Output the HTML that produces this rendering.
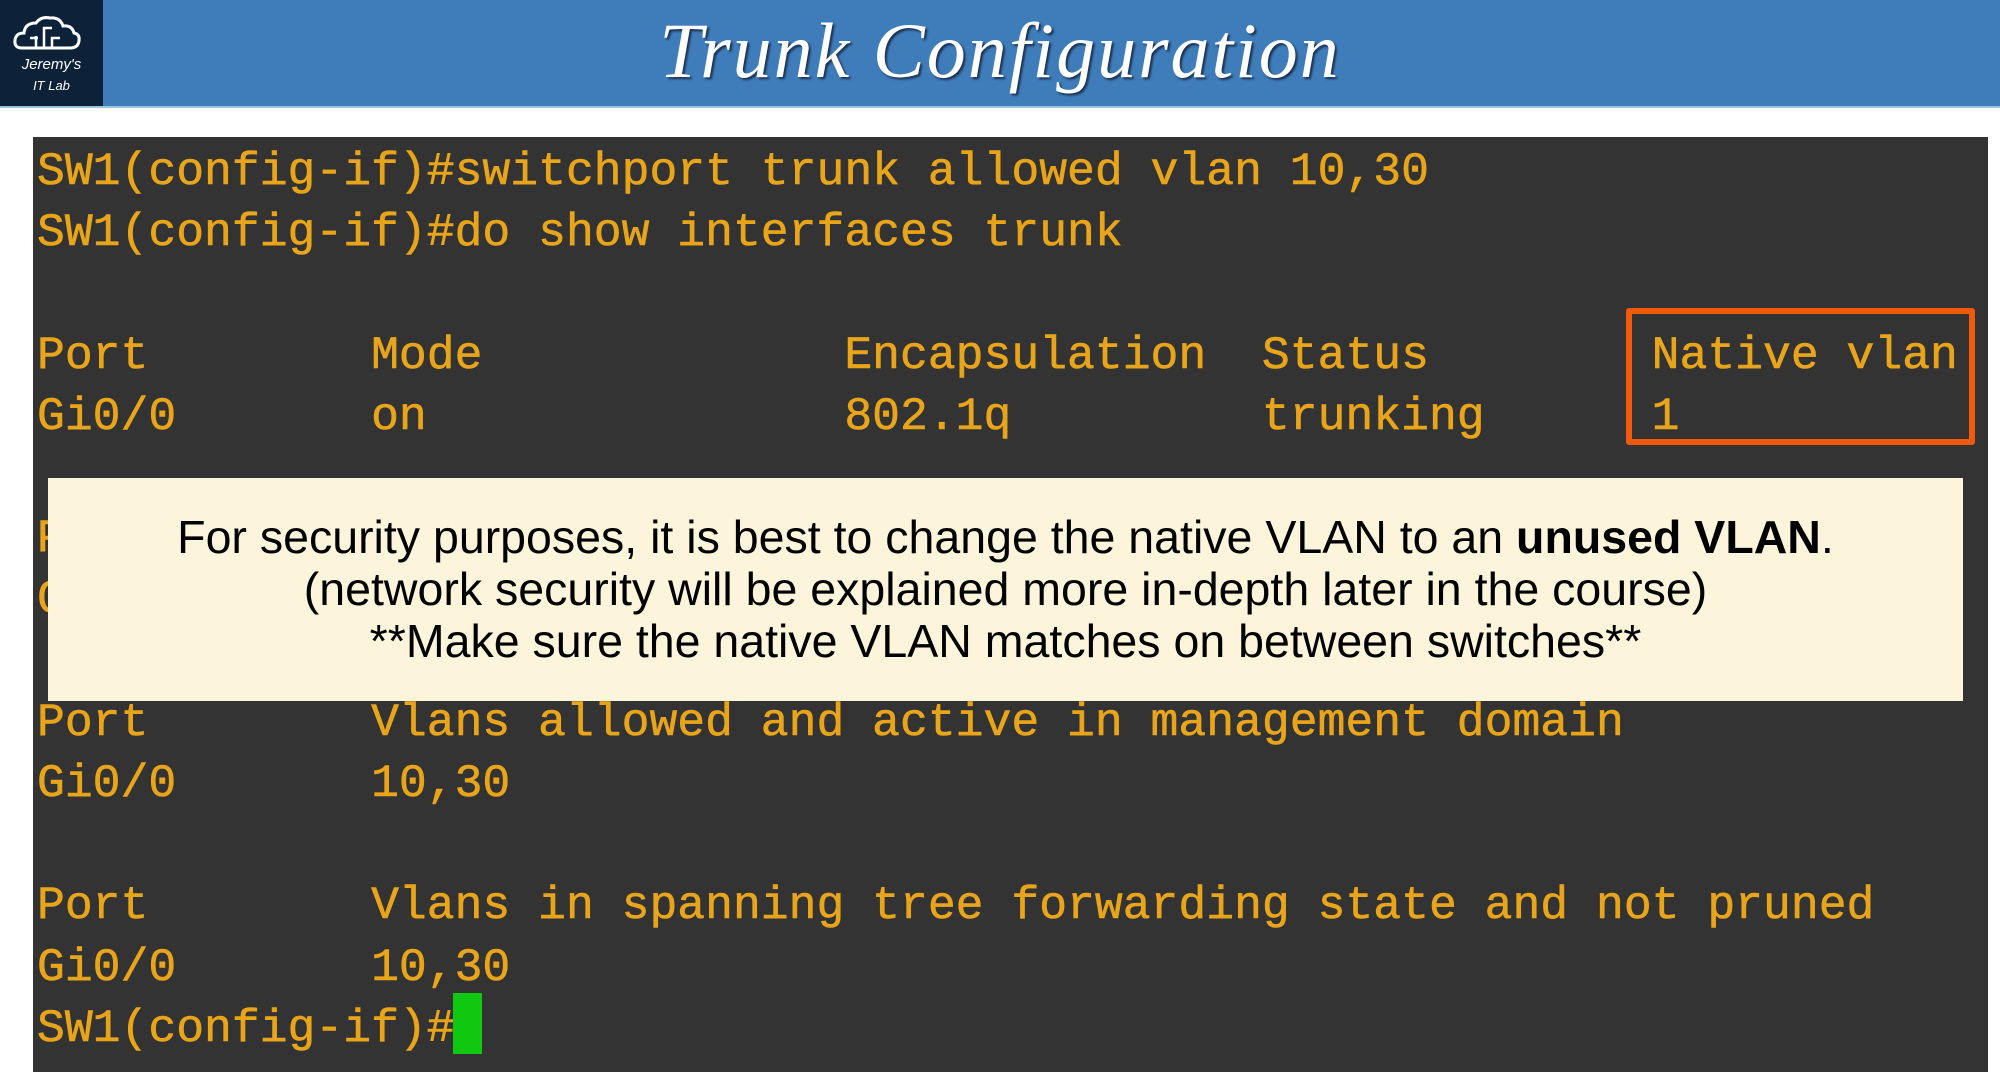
<!DOCTYPE html>
<html><head><meta charset="utf-8"><style>
html,body{margin:0;padding:0;width:2000px;height:1082px;overflow:hidden;background:#fff;position:relative;font-family:"Liberation Sans",sans-serif}
.hdr{position:absolute;left:0;top:0;width:2000px;height:106px;background:#3f7dba;border-bottom:2px solid #9cc3de}
.logo{position:absolute;left:0;top:0;width:103px;height:106px;background:#0d2238;color:#fff;text-align:center}
.logo .t{position:absolute;left:0;width:103px;font-family:"Liberation Sans",sans-serif;font-style:italic;font-size:15px}
.title{position:absolute;left:0;width:2000px;top:6px;text-align:center;color:#fff;font-family:"Liberation Serif",serif;font-style:italic;font-size:78px;letter-spacing:2px;text-shadow:2px 2px 2px #1a3050}
.term{position:absolute;left:33px;top:137px;width:1955px;height:935px;background:#333333}
pre{margin:0;position:absolute;left:4px;top:4px;font-family:"Liberation Mono",monospace;font-size:46.4px;line-height:61.2px;color:#e9a51a;-webkit-text-stroke:0.6px #e9a51a}
.cur{position:absolute;left:453px;top:993px;width:29px;height:61px;background:#10c810}
.ob{position:absolute;left:1626px;top:308px;width:337px;height:125px;border:6px solid #f05a0a;border-radius:3px}
.yb{position:absolute;left:48px;top:478px;width:1915px;height:223px;background:#fdf4dc;text-align:center;font-size:46.5px;line-height:52px;color:#000}
</style></head><body>
<div class="hdr"></div>
<div class="logo">
<svg width="103" height="50" viewBox="0 0 103 50" style="position:absolute;left:0;top:8px"><path d="M22 40 Q14 40 15 32 Q16 25 24 25 Q25 15 36 15 Q41 8 50 10 Q60 9 63 18 Q72 17 74 25 Q80 26 79 33 Q78 40 70 40 Z" fill="none" stroke="#fff" stroke-width="3"/><path d="M36 40 V28 M44 40 V20 H52 M52 40 V30 H60 M30 30 H38" stroke="#fff" stroke-width="2.5" fill="none"/></svg>
<div class="t" style="top:56px">Jeremy's</div>
<div class="t" style="top:78px;font-size:13px">IT Lab</div>
</div>
<div class="title">Trunk Configuration</div>
<div class="term">
<pre>SW1(config-if)#switchport trunk allowed vlan 10,30
SW1(config-if)#do show interfaces trunk

Port        Mode             Encapsulation  Status        Native vlan
Gi0/0       on               802.1q         trunking      1

Port        Vlans allowed on trunk
Gi0/0       10,30

Port        Vlans allowed and active in management domain
Gi0/0       10,30

Port        Vlans in spanning tree forwarding state and not pruned
Gi0/0       10,30
SW1(config-if)#</pre>
</div>
<div class="cur"></div>
<div class="ob"></div>
<div class="yb"><div style="padding-top:33px">For security purposes, it is best to change the native VLAN to an <b>unused VLAN</b>.<br>(network security will be explained more in-depth later in the course)<br>**Make sure the native VLAN matches on between switches**</div></div>
</body></html>
